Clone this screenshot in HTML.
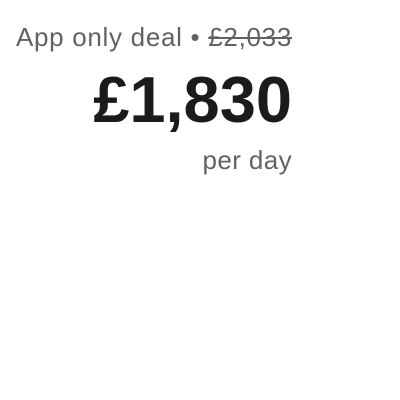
<!DOCTYPE html>
<html><head><meta charset="utf-8"><style>
html,body{margin:0;padding:0;width:400px;height:400px;background:#fff;overflow:hidden}
div{position:absolute;right:108px;white-space:nowrap;font-family:"Liberation Sans",Arial,sans-serif;line-height:1}
.a{top:24px;font-size:26px;letter-spacing:0.7px;color:#5f6368}
.a s{text-decoration-thickness:2px}
.b{top:67px;font-size:65px;font-weight:bold;color:#1b1b1b}
.c{top:147px;font-size:26px;letter-spacing:0.4px;color:#5f6368}
</style></head><body>
<div class="a">App only deal • <s>£2,033</s></div>
<div class="b">£1,830</div>
<div class="c">per day</div>
</body></html>
